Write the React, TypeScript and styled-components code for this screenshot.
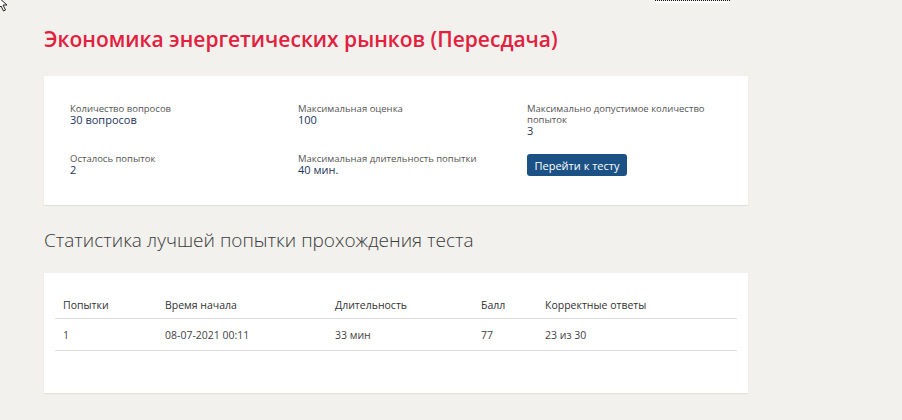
import React from 'react';
import styled, { createGlobalStyle } from 'styled-components';

const GlobalStyle = createGlobalStyle`
  html, body {
    margin: 0;
    padding: 0;
    background: #f2f1ee;
    font-family: 'Open Sans', 'Noto Sans', sans-serif;
  }
`;

const Page = styled.div`
  position: relative;
  min-height: 420px;
  padding: 24px 0 0 44px;
  box-sizing: border-box;
`;

const Content = styled.div`
  width: 704px;
`;

const Title = styled.h1`
  margin: 0 0 22px;
  font-size: 21px;
  line-height: 30px;
  font-weight: 600;
  color: #e3203d;
`;

const Card = styled.div<{ $pad: string }>`
  background: #fff;
  padding: ${(p) => p.$pad};
  box-shadow: 0 1px 1px rgba(0, 0, 0, 0.07);
`;

const InfoGrid = styled.div`
  display: grid;
  grid-template-columns: 228px 229px 200px;
  row-gap: 16px;
`;

const InfoItem = styled.div`
  display: flex;
  flex-direction: column;
`;

const Label = styled.span`
  font-size: 9.5px;
  line-height: 11px;
  color: #555;
  width: 190px;
`;

const Value = styled.span`
  font-size: 11px;
  line-height: 12px;
  color: #1c355e;
`;

const Button = styled.button`
  align-self: flex-start;
  width: 100px;
  height: 22px;
  margin-top: 1px;
  border: none;
  border-radius: 3px;
  background: #1b5185;
  color: #fff;
  font-family: inherit;
  font-size: 11px;
  padding: 0;
  cursor: pointer;
`;

const SectionTitle = styled.h2`
  margin: 22px 0 20px;
  font-size: 19px;
  line-height: 26px;
  font-weight: 300;
  color: #3a3a3a;
`;

const Table = styled.table`
  width: 682px;
  table-layout: fixed;
  border-collapse: collapse;
  font-size: 10.5px;
  color: #333;
`;

const Th = styled.th`
  text-align: left;
  font-weight: 400;
  height: 26px;
  padding: 0 0 0 8px;
  vertical-align: middle;
  border-bottom: 1px solid #dcdcdc;
`;

const Td = styled.td`
  height: 31px;
  padding: 0 0 0 8px;
  vertical-align: middle;
  border-bottom: 1px solid #dcdcdc;
  color: #444;
`;

const Cursor = styled.svg`
  position: absolute;
  left: -3px;
  top: -4px;
`;

const FocusMark = styled.div`
  position: absolute;
  left: 655px;
  top: -1px;
  width: 75px;
  height: 1px;
  border-bottom: 1.5px dotted #111;
  box-shadow: 0 2px 2px #fff;
`;

const info = [
  { label: 'Количество вопросов', value: '30 вопросов' },
  { label: 'Максимальная оценка', value: '100' },
  { label: 'Максимально допустимое количество попыток', value: '3' },
  { label: 'Осталось попыток', value: '2' },
  { label: 'Максимальная длительность попытки', value: '40 мин.' },
];

const columns = [
  { title: 'Попытки', width: 102 },
  { title: 'Время начала', width: 170 },
  { title: 'Длительность', width: 146 },
  { title: 'Балл', width: 64 },
  { title: 'Корректные ответы', width: 200 },
];

const rows = [['1', '08-07-2021 00:11', '33 мин', '77', '23 из 30']];

export default function App() {
  return (
    <Page>
      <GlobalStyle />
      <Cursor width="14" height="16" viewBox="0 0 14 16">
        <path d="M1 1 L1 13 L4 10 L6.5 15 L8.5 14 L6 9 L10 9 Z" fill="#fff" stroke="#222" strokeWidth="1" />
      </Cursor>
      <FocusMark />
      <Content>
        <Title>Экономика энергетических рынков (Пересдача)</Title>
        <Card $pad="27px 26px 29px">
          <InfoGrid>
            {info.map((i) => (
              <InfoItem key={i.label}>
                <Label>{i.label}</Label>
                <Value>{i.value}</Value>
              </InfoItem>
            ))}
            <InfoItem>
              <Button>Перейти к тесту</Button>
            </InfoItem>
          </InfoGrid>
        </Card>
        <SectionTitle>Статистика лучшей попытки прохождения теста</SectionTitle>
        <Card $pad="19px 11px 42px">
          <Table>
            <colgroup>
              {columns.map((c) => (
                <col key={c.title} style={{ width: c.width }} />
              ))}
            </colgroup>
            <thead>
              <tr>
                {columns.map((c) => (
                  <Th key={c.title}>{c.title}</Th>
                ))}
              </tr>
            </thead>
            <tbody>
              {rows.map((r, idx) => (
                <tr key={idx}>
                  {r.map((cell, j) => (
                    <Td key={j}>{cell}</Td>
                  ))}
                </tr>
              ))}
            </tbody>
          </Table>
        </Card>
      </Content>
    </Page>
  );
}
